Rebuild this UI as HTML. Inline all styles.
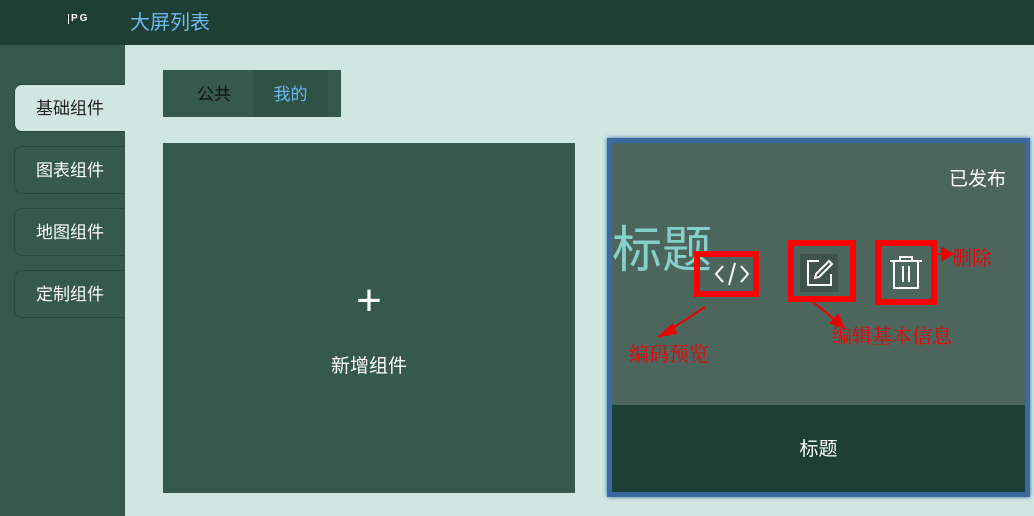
<!DOCTYPE html>
<html><head><meta charset="utf-8"><style>
*{margin:0;padding:0;box-sizing:border-box}
body{width:1034px;height:516px;overflow:hidden;background:#d0e6e1;font-family:"Liberation Sans","Noto Sans CJK SC",sans-serif;position:relative}
.hdr{position:absolute;left:0;top:0;width:1034px;height:45px;background:#1e4034}
.logo{position:absolute;left:68px;top:14px;color:#fff;font-size:10px;letter-spacing:2px;font-weight:bold;border-left:1px solid #fff;padding-left:2px;line-height:10px}
.title{position:absolute;left:130px;top:6px;color:#6fb8f0;font-size:20px}
.side{position:absolute;left:0;top:45px;width:125px;height:471px;background:#35594d}
.btn{position:absolute;left:14px;width:111px;height:48px;border:1px solid #284a3e;border-right:none;border-radius:8px 0 0 8px;color:#fff;font-size:17px;line-height:48px;padding-left:21px}
.btn.act{background:#d0e6e1;color:#222}
.tabs{position:absolute;left:163px;top:70px;width:178px;height:47px;background:#35594d}
.tab{position:absolute;top:0;height:47px;line-height:50px;font-size:17px;text-align:center}
.add{position:absolute;left:163px;top:143px;width:412px;height:350px;background:#35594d;color:#fff;text-align:center}
.card{position:absolute;left:607px;top:138px;width:423px;height:359px;border:5px solid #3a6aa0;box-shadow:0 0 4px #3a6aa0;background:#4d665d}
.red{position:absolute;border:6px solid #f00}
.rt{position:absolute;color:#e00;font-family:"Liberation Serif","Noto Serif CJK SC",serif;font-size:20px}
</style></head><body>
<div class="hdr"><div class="logo">PG</div><div class="title">大屏列表</div></div>
<div class="side"></div>
<div class="btn act" style="top:84px">基础组件</div>
<div class="btn" style="top:146px">图表组件</div>
<div class="btn" style="top:208px">地图组件</div>
<div class="btn" style="top:270px">定制组件</div>
<div class="tabs"><div class="tab" style="left:12px;width:78px;color:#111">公共</div><div class="tab" style="left:90px;width:75px;background:#2e5246;color:#6fb8f0">我的</div></div>
<div class="add"><div style="font-size:44px;margin-top:136px;line-height:44px">+</div><div style="font-size:19px;margin-top:28px">新增组件</div></div>
<div class="card">
<div style="position:absolute;right:0;top:21px;width:76px;color:#fff;font-size:19px">已发布</div>
<div style="position:absolute;left:0;top:76px;color:#86d0cc;font-size:50px;line-height:62px">标题</div>
<div style="position:absolute;left:0;bottom:0;width:413px;height:87px;background:#1e4034;color:#fff;font-size:19px;text-align:center;line-height:90px">标题</div>
</div>
<div class="red" style="left:694px;top:251px;width:65px;height:46px"></div>
<svg style="position:absolute;left:712px;top:260px" width="40" height="28" viewBox="0 0 40 28" fill="none" stroke="#fff" stroke-width="2"><path d="M11 6 L4 14 L11 22 M29 6 L36 14 L29 22 M23 3 L17 25"/></svg>
<div class="red" style="left:788px;top:240px;width:68px;height:62px"></div>
<div style="position:absolute;left:800px;top:254px;width:38px;height:38px;background:#3f524b"></div>
<svg style="position:absolute;left:803px;top:257px" width="32" height="32" viewBox="0 0 32 32" fill="none" stroke="#fff" stroke-width="2"><path d="M16 4 H5 V28 H28 V17"/><path d="M26 4 L29 7 L16 20 L12 21 L13 17 Z"/></svg>
<div class="red" style="left:875px;top:240px;width:62px;height:65px"></div>
<svg style="position:absolute;left:888px;top:254px" width="36" height="38" viewBox="0 0 36 38" fill="none" stroke="#fff" stroke-width="2"><path d="M2 7 H34 M12 7 V3 H24 V7 M6 7 V34 H30 V7 M15 12 V28 M21 12 V28"/></svg>
<svg style="position:absolute;left:0;top:0" width="1034" height="516"><g stroke="#e00" stroke-width="2" fill="#e00"><line x1="705" y1="307" x2="670" y2="330"/><polygon points="660,336 672,325 676,333"/><line x1="813" y1="302" x2="835" y2="320"/><polygon points="843,327 831,323 838,315"/><line x1="935" y1="254" x2="943" y2="254"/><polygon points="952,254 942,248 942,260"/></g></svg>
<div class="rt" style="left:629px;top:338px">编码预览</div>
<div class="rt" style="left:832px;top:320px">编辑基本信息</div>
<div class="rt" style="left:952px;top:242px">删除</div>
</body></html>
